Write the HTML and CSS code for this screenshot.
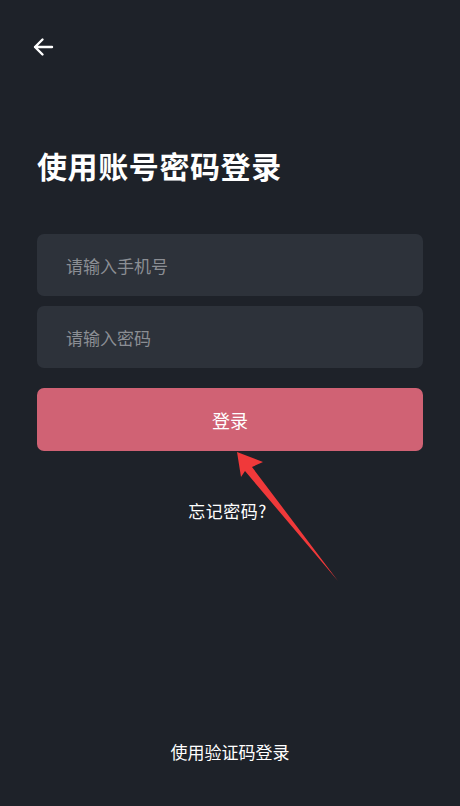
FILE: index.html
```html
<!doctype html>
<html lang="zh-CN">
    <head>
        <meta charset="UTF-8" />
        <meta name="viewport" content="width=device-width, initial-scale=1.0" />
        <title>使用账号密码登录</title>
        <link rel="stylesheet" href="styles.css">
    </head>
    <body>
        <div class="page">
            <div class="top-bar">
                <button class="back-btn" aria-label="返回">
                    <svg width="22" height="22" viewBox="0 0 22 22">
                        <path d="M20 11H3M10.5 3.5L3 11l7.5 7.5" fill="none" stroke="#ffffff" stroke-width="2.4" stroke-linecap="round" stroke-linejoin="round"/>
                    </svg>
                </button>
            </div>

            <h1 class="title">使用账号密码登录</h1>

            <form class="login-form">
                <input class="field" type="tel" placeholder="请输入手机号" />
                <input class="field" type="password" placeholder="请输入密码" />
                <button class="login-btn" type="button">登录</button>
            </form>

            <a class="forgot" href="#">忘记密码?</a>

            <div class="footer">
                <a class="switch-mode" href="#">使用验证码登录</a>
            </div>

            <!-- annotation arrow -->
            <svg class="pointer" width="460" height="806" viewBox="0 0 460 806">
                <path d="M237 452 L263 462 L252 467 L338 581 L245 471 L241 477 Z" fill="#f0393a"/>
            </svg>
        </div>
    </body>
</html>
```

FILE: styles.css
```css
html, body {
    margin: 0;
    padding: 0;
    height: 100%;
}
body {
    font-family: "Noto Sans CJK SC", "Noto Sans", sans-serif;
    background-color: #1e2229;
    color: #ffffff;
}
.page {
    position: relative;
    height: 806px;
    box-sizing: border-box;
    padding: 0 37px;
    display: flex;
    flex-direction: column;
}
.top-bar {
    height: 94px;
    display: flex;
    align-items: flex-start;
    padding-top: 36px;
    box-sizing: border-box;
    margin-left: -6px;
}
.back-btn {
    background: none;
    border: none;
    padding: 0;
    width: 24px;
    height: 22px;
    cursor: pointer;
}
.title {
    margin: 49px 0 0 0;
    font-size: 30px;
    font-weight: bold;
    letter-spacing: 0.6px;
    line-height: 44px;
    color: #ffffff;
}
.login-form {
    margin-top: 47px;
    display: flex;
    flex-direction: column;
    gap: 10px;
}
.field {
    height: 62px;
    box-sizing: border-box;
    border: none;
    border-radius: 7px;
    background-color: #2d323a;
    padding: 0 29px;
    font-family: inherit;
    font-size: 17px;
    color: #ffffff;
    outline: none;
}
.field::placeholder {
    color: #8b8e94;
}
.login-btn {
    margin-top: 10px;
    height: 63px;
    border: none;
    border-radius: 7px;
    background-color: #d06274;
    color: #ffffff;
    font-family: inherit;
    font-size: 18px;
    cursor: pointer;
}
.forgot {
    margin-top: 48px;
    align-self: center;
    margin-right: 5px;
    color: #ffffff;
    text-decoration: none;
    font-size: 17px;
    line-height: 24px;
    letter-spacing: 0.5px;
}
.footer {
    margin-top: auto;
    padding-bottom: 42px;
    text-align: center;
}
.switch-mode {
    color: #ffffff;
    text-decoration: none;
    font-size: 17px;
    line-height: 24px;
}
.pointer {
    position: absolute;
    left: 0;
    top: 0;
    pointer-events: none;
}
```
